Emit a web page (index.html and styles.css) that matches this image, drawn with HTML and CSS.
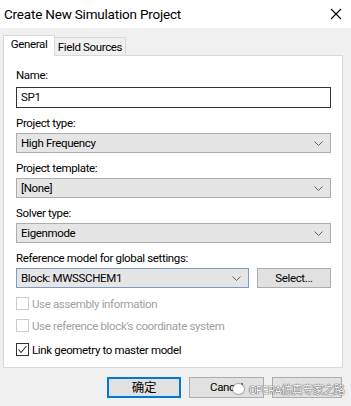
FILE: index.html
```html
<!DOCTYPE html>
<html>
<head>
<meta charset="utf-8">
<link rel="stylesheet" href="styles.css">
</head>
<body>
<div class="window">
  <div class="titlebar">
    <span class="title">Create New Simulation Project</span>
    <svg class="close" width="12" height="12" viewBox="0 0 12 12"><path d="M1 1L11 11M11 1L1 11" stroke="#000" stroke-width="1.1" fill="none"/></svg>
  </div>
  <div class="body">
    <div class="tabs">
      <div class="tab active">General</div>
      <div class="tab">Field Sources</div>
    </div>
    <div class="panel">
      <div class="label first">Name:</div>
      <div class="input">SP1</div>

      <div class="label">Project type:</div>
      <div class="combo"><span>High Frequency</span><svg class="chev" width="9" height="5" viewBox="0 0 9 5"><path d="M0.5 0.5L4.5 4.5L8.5 0.5" stroke="#606060" fill="none"/></svg></div>

      <div class="label">Project template:</div>
      <div class="combo"><span>[None]</span><svg class="chev" width="9" height="5" viewBox="0 0 9 5"><path d="M0.5 0.5L4.5 4.5L8.5 0.5" stroke="#606060" fill="none"/></svg></div>

      <div class="label">Solver type:</div>
      <div class="combo"><span>Eigenmode</span><svg class="chev" width="9" height="5" viewBox="0 0 9 5"><path d="M0.5 0.5L4.5 4.5L8.5 0.5" stroke="#606060" fill="none"/></svg></div>

      <div class="label">Reference model for global settings:</div>
      <div class="refrow">
        <div class="combo ref"><span>Block: MWSSCHEM1</span><svg class="chev" width="9" height="5" viewBox="0 0 9 5"><path d="M0.5 0.5L4.5 4.5L8.5 0.5" stroke="#606060" fill="none"/></svg></div>
        <div class="btn select">Select...</div>
      </div>

      <div class="check disabled first-check"><span class="box"></span><span>Use assembly information</span></div>
      <div class="check disabled"><span class="box"></span><span>Use reference block's coordinate system</span></div>
      <div class="check on"><span class="box"><svg width="11" height="11" viewBox="0 0 11 11"><path d="M1.5 5.5L4 8.5L9.5 2" stroke="#333" stroke-width="1.1" fill="none"/></svg></span><span>Link geometry to master model</span></div>
    </div>
    <div class="buttons">
      <div class="btn ok">确定</div>
      <div class="btn">Cancel</div>
      <div class="btn"></div>
    </div>
  </div>
  <div class="watermark">
    <span class="wm-icon"></span>
    <span class="wm-text">OPERA仿真专家之路</span>
  </div>
</div>
</body>
</html>
```
FILE: styles.css
```css
html, body {
  margin: 0;
  padding: 0;
}
body {
  width: 351px;
  height: 406px;
  background: #f0f0f0;
  font-family: "Roboto", "Liberation Sans", "Noto Sans CJK SC", sans-serif;
  font-size: 11.5px;
  letter-spacing: -0.35px;
  color: #000;
  overflow: hidden;
}
.window {
  position: relative;
  width: 351px;
  height: 406px;
}
.titlebar {
  height: 28px;
  background: #fff;
  display: flex;
  align-items: center;
  justify-content: space-between;
  padding: 0 9px 0 4px;
}
.title {
  font-size: 13.5px;
  letter-spacing: -0.2px;
}
.body {
  padding: 7px 8px 0 3px;
}
.tabs {
  display: flex;
  align-items: flex-end;
  height: 20px;
  position: relative;
  z-index: 1;
}
.tab {
  height: 18px;
  line-height: 18px;
  border: 1px solid #d9d9d9;
  border-bottom: none;
  background: #f0f0f0;
  box-sizing: border-box;
  width: 71px;
  text-align: center;
  white-space: nowrap;
}
.tab.active {
  height: 21px;
  width: 52px;
  background: #fff;
  line-height: 17px;
  margin-bottom: -1px;
  padding-bottom: 2px;
}
.tab + .tab {
  border-left: none;
}
.panel {
  background: #fff;
  border: 1px solid #d9d9d9;
  height: 313px;
  box-sizing: border-box;
  padding: 0 11px 0 12px;
  display: flex;
  flex-direction: column;
}
.label {
  line-height: 15px;
  height: 15px;
  margin-top: 8px;
  margin-bottom: 2px;
}
.label.first {
  margin-top: 12px;
  margin-bottom: 4px;
}
.input {
  height: 21px;
  box-sizing: border-box;
  border: 1px solid #333;
  padding: 0 4px;
  line-height: 19px;
}
.combo {
  height: 20px;
  box-sizing: border-box;
  border: 1px solid #adadad;
  background: #e5e5e5;
  display: flex;
  align-items: center;
  justify-content: space-between;
  padding: 0 7px 0 4px;
}
.chev {
  display: block;
}
.refrow {
  display: flex;
  gap: 8px;
}
.combo.ref {
  width: 233px;
  border-color: #7a9cc0;
}
.btn {
  height: 21px;
  box-sizing: border-box;
  border: 1px solid #adadad;
  background: #e1e1e1;
  text-align: center;
  line-height: 19px;
}
.btn.select {
  flex: 1;
  height: 20px;
  line-height: 18px;
}
.check {
  display: flex;
  align-items: center;
  height: 13px;
  gap: 3px;
  margin-top: 9px;
}
.check.first-check {
  margin-top: 9px;
}
.check.on {
  margin-top: 11px;
}
.box {
  width: 13px;
  height: 13px;
  box-sizing: border-box;
  border: 1px solid #cccccc;
  background: #fff;
  display: flex;
  align-items: center;
  justify-content: center;
}
.check.disabled {
  color: #a0a0a0;
}
.check.on .box {
  border-color: #333;
}
.buttons {
  display: flex;
  gap: 8px;
  padding-left: 104px;
  margin-top: 9px;
}
.buttons .btn {
  width: 75px;
}
.buttons .btn:last-child {
  width: 70px;
}
.btn.ok {
  border: 2px solid #0078d7;
  line-height: 17px;
  width: 74px;
  font-size: 12.5px;
}
.watermark {
  position: absolute;
  left: 233px;
  top: 381px;
  display: flex;
  align-items: center;
  gap: 5px;
}
.wm-icon {
  width: 11px;
  height: 10px;
  border-radius: 50%;
  background: #fff;
  box-shadow: 0 0 1px 1px rgba(120,120,120,0.6);
}
.wm-text {
  color: #fff;
  font-size: 11px;
  letter-spacing: -0.5px;
  text-shadow: 0 0 1px #555, 0 0 1px #555, 0 0 1px #555;
}
```
